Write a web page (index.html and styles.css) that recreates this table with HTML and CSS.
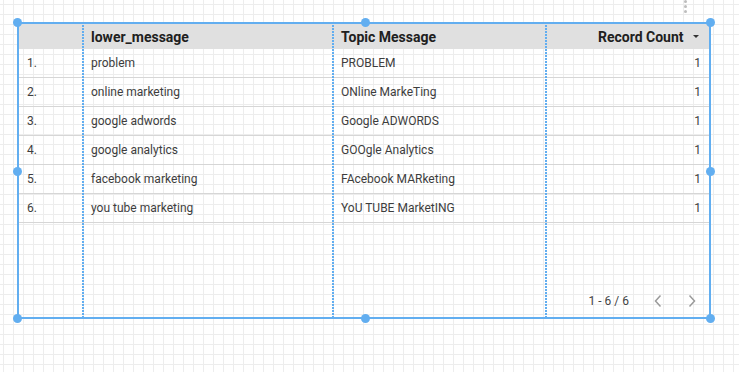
FILE: index.html
```html
<!DOCTYPE html>
<html>
<head>
<meta charset="utf-8">
<link rel="stylesheet" href="styles.css">
</head>
<body>
<div class="canvas">
  <div class="more"><span></span><span></span><span></span></div>
  <div class="chart">
    <div class="table">
      <div class="row head">
        <div class="cell c1"></div>
        <div class="cell c2">lower_message</div>
        <div class="cell c3">Topic Message</div>
        <div class="cell c4">Record Count <span class="sort"></span></div>
      </div>
      <div class="row"><div class="cell c1">1.</div><div class="cell c2">problem</div><div class="cell c3">PROBLEM</div><div class="cell c4">1</div></div>
      <div class="row"><div class="cell c1">2.</div><div class="cell c2">online marketing</div><div class="cell c3">ONline MarkeTing</div><div class="cell c4">1</div></div>
      <div class="row"><div class="cell c1">3.</div><div class="cell c2">google adwords</div><div class="cell c3">Google ADWORDS</div><div class="cell c4">1</div></div>
      <div class="row"><div class="cell c1">4.</div><div class="cell c2">google analytics</div><div class="cell c3">GOOgle Analytics</div><div class="cell c4">1</div></div>
      <div class="row"><div class="cell c1">5.</div><div class="cell c2">facebook marketing</div><div class="cell c3">FAcebook MARketing</div><div class="cell c4">1</div></div>
      <div class="row"><div class="cell c1">6.</div><div class="cell c2">you tube marketing</div><div class="cell c3">YoU TUBE MarketING</div><div class="cell c4">1</div></div>
    </div>
    <div class="pager">
      <span class="range">1 - 6 / 6</span>
      <svg class="chev" width="10" height="14" viewBox="0 0 10 14"><path d="M7.5 1.5 L2.5 7 L7.5 12.5" fill="none" stroke="#9a9a9a" stroke-width="1.5"/></svg>
      <svg class="chev" width="10" height="14" viewBox="0 0 10 14"><path d="M2.5 1.5 L7.5 7 L2.5 12.5" fill="none" stroke="#9a9a9a" stroke-width="1.5"/></svg>
    </div>
    <div class="guide g1"></div>
    <div class="guide g2"></div>
    <div class="guide g3"></div>
    <div class="handle h-tl"></div>
    <div class="handle h-tm"></div>
    <div class="handle h-tr"></div>
    <div class="handle h-ml"></div>
    <div class="handle h-mr"></div>
    <div class="handle h-bl"></div>
    <div class="handle h-bm"></div>
    <div class="handle h-br"></div>
  </div>
</div>
</body>
</html>
```

FILE: styles.css
```css
html, body {
  margin: 0;
  padding: 0;
  background: #fff;
}
.canvas {
  position: relative;
  width: 739px;
  height: 372px;
  box-sizing: border-box;
  padding: 22px 0 0 17px;
  background-color: #fff;
  background-image:
    linear-gradient(to right, #ededed 1px, transparent 1px),
    linear-gradient(to bottom, #ededed 1px, transparent 1px);
  background-size: 10px 10px;
  background-position: 3px 4px;
  font-family: Roboto, "Liberation Sans", sans-serif;
}
.more {
  position: absolute;
  left: 684px;
  top: 0;
  display: flex;
  flex-direction: column;
  gap: 2px;
}
.more span {
  width: 3px;
  height: 3px;
  border-radius: 50%;
  background: #bdbdbd;
}
.chart {
  position: relative;
  width: 694px;
  height: 297px;
  box-sizing: border-box;
  border: 2px solid #62aef0;
  display: flex;
  flex-direction: column;
}
.table {
  display: flex;
  flex-direction: column;
}
.row {
  display: grid;
  grid-template-columns: 64px 250px 213px 1fr;
  height: 29px;
  box-sizing: border-box;
  border-bottom: 1px solid #d6d6d6;
  align-items: center;
  font-size: 12px;
  color: #3d3d3d;
}
.row.head {
  height: 25px;
  border-bottom: none;
  background: #e0e0e0;
  font-size: 14px;
  font-weight: 700;
  color: #202020;
}
.cell {
  padding: 0 8px;
  white-space: nowrap;
}
.c4 {
  text-align: right;
}
.sort {
  display: inline-block;
  width: 0;
  height: 0;
  margin-left: 6px;
  margin-right: 2px;
  border-left: 3px solid transparent;
  border-right: 3px solid transparent;
  border-top: 3px solid #333;
  vertical-align: middle;
  position: relative;
  top: -1px;
}
.pager {
  margin-top: auto;
  height: 28px;
  display: flex;
  align-items: center;
  justify-content: flex-end;
  padding-right: 12px;
  margin-bottom: 2px;
  font-size: 12px;
  color: #444;
}
.range {
  margin-right: 24px;
}
.chev {
  display: block;
}
.chev + .chev {
  margin-left: 24px;
}
.guide {
  position: absolute;
  top: -2px;
  bottom: -2px;
  width: 2px;
  background: repeating-linear-gradient(to bottom, #62aef0 0 2px, transparent 2px 3px);
}
.g1 { left: 63px; }
.g2 { left: 313px; }
.g3 { left: 526px; }
.handle {
  position: absolute;
  width: 9px;
  height: 9px;
  border-radius: 50%;
  background: #62aef0;
  margin: -5.5px 0 0 -5.5px;
}
.h-tl { left: -1px; top: -1px; }
.h-tm { left: 347px; top: -1px; }
.h-tr { left: 692px; top: -1px; }
.h-ml { left: -1px; top: 148px; }
.h-mr { left: 692px; top: 148px; }
.h-bl { left: -1px; top: 295px; }
.h-bm { left: 347px; top: 295px; }
.h-br { left: 692px; top: 295px; }
```
